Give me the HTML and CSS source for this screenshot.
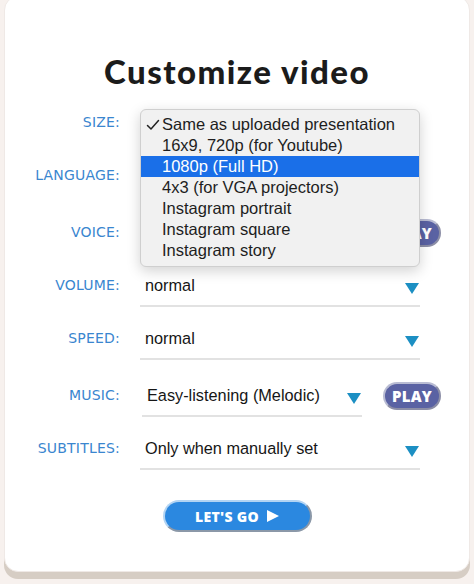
FILE: index.html
```html
<!DOCTYPE html>
<html lang="en">
<head>
<meta charset="utf-8">
<title>Customize video</title>
<link rel="stylesheet" href="styles.css">
</head>
<body>
<div class="card">
  <h1 class="title">Customize video</h1>
  <div class="form">
    <div class="row">
      <div class="label">SIZE:</div>
      <div class="control-wrap">
        <div class="select">
          <span class="value"></span>
          <span class="caret"></span>
        </div>
        <div class="menu">
          <div class="item checked">
            <svg class="check" width="14" height="12" viewBox="0 0 14 12"><path d="M1.5 6.5 L5 10 L12.5 1.5" fill="none" stroke="#222" stroke-width="1.5" stroke-linecap="round" stroke-linejoin="round"/></svg>
            Same as uploaded presentation
          </div>
          <div class="item">16x9, 720p (for Youtube)</div>
          <div class="item active">1080p (Full HD)</div>
          <div class="item">4x3 (for VGA projectors)</div>
          <div class="item">Instagram portrait</div>
          <div class="item">Instagram square</div>
          <div class="item">Instagram story</div>
        </div>
      </div>
    </div>
    <div class="row">
      <div class="label">LANGUAGE:</div>
      <div class="control-wrap">
        <div class="select">
          <span class="value"></span>
          <span class="caret"></span>
        </div>
      </div>
    </div>
    <div class="row play-row">
      <div class="label">VOICE:</div>
      <div class="control-wrap split">
        <div class="select narrow">
          <span class="value"></span>
          <span class="caret"></span>
        </div>
        <button class="play">PLAY</button>
      </div>
    </div>
    <div class="row">
      <div class="label">VOLUME:</div>
      <div class="control-wrap">
        <div class="select">
          <span class="value">normal</span>
          <span class="caret"></span>
        </div>
      </div>
    </div>
    <div class="row">
      <div class="label">SPEED:</div>
      <div class="control-wrap">
        <div class="select">
          <span class="value">normal</span>
          <span class="caret"></span>
        </div>
      </div>
    </div>
    <div class="row play-row">
      <div class="label">MUSIC:</div>
      <div class="control-wrap split">
        <div class="select narrow">
          <span class="value">Easy-listening (Melodic)</span>
          <span class="caret"></span>
        </div>
        <button class="play">PLAY</button>
      </div>
    </div>
    <div class="row">
      <div class="label">SUBTITLES:</div>
      <div class="control-wrap">
        <div class="select">
          <span class="value">Only when manually set</span>
          <span class="caret"></span>
        </div>
      </div>
    </div>
  </div>
  <button class="go">LET'S GO <span class="go-arrow"></span></button>
</div>
</body>
</html>
```
FILE: styles.css
```css
html, body {
  margin: 0;
  padding: 0;
  background: #f7f1ee;
}
body {
  width: 474px;
  height: 584px;
  overflow: hidden;
}
.card {
  margin: -4px 4px 0 4px;
  background: #ffffff;
  border: 1px solid #efe9e6;
  border-radius: 14px;
  box-shadow: 0 7px 0 #d6cdc4;
  display: flex;
  flex-direction: column;
  padding-bottom: 39px;
}
.title {
  margin: 54px 0 15px 0;
  font-family: Lato, "Open Sans", sans-serif;
  font-weight: 900;
  font-size: 33px;
  line-height: 40px;
  letter-spacing: 1.45px;
  color: #1b1b1b;
  text-align: center;
}
.form {
  display: flex;
  flex-direction: column;
}
.row {
  display: grid;
  grid-template-columns: 115px 280px;
  column-gap: 20px;
  height: 53px;
}
.row.play-row {
  margin-top: 4px;
}
.label {
  text-align: right;
  padding-top: 6px;
  line-height: 20px;
  font-family: "DejaVu Sans", sans-serif;
  font-size: 14px;
  letter-spacing: 0.2px;
  color: #3a86cf;
}
.control-wrap {
  position: relative;
}
.control-wrap.split {
  display: flex;
  align-items: flex-start;
  width: 301px;
}
.select {
  display: flex;
  justify-content: space-between;
  align-items: flex-start;
  min-height: 20px;
  padding: 6px 1px 10px 5px;
  line-height: 20px;
  border-bottom: 2px solid #e2e2e2;
  font-family: "Liberation Sans", Arial, sans-serif;
  font-size: 16.3px;
  color: #161616;
}
.select.narrow {
  width: 214px;
  margin-left: 2px;
}
.caret {
  margin-top: 8px;
  width: 0;
  height: 0;
  border-left: 7px solid transparent;
  border-right: 7px solid transparent;
  border-top: 11px solid #1c8fc3;
}
.play {
  margin-left: 21px;
  margin-top: 3px;
  width: 58px;
  height: 28px;
  border-radius: 14px;
  background: #5a62a3;
  border: 2px solid;
  border-color: #b9bcd3 #8c8ea6 #8c8ea6 #b9bcd3;
  color: #ffffff;
  font-family: "Open Sans", sans-serif;
  font-weight: 800;
  font-size: 15px;
  letter-spacing: 0.2px;
  padding: 0;
  line-height: 24px;
}
.menu {
  position: absolute;
  top: 3px;
  left: 0;
  width: 280px;
  box-sizing: border-box;
  background: #f1f1f1;
  border: 1px solid #cfcfcf;
  border-radius: 6px;
  box-shadow: 0 4px 14px rgba(0, 0, 0, 0.18);
  padding: 4px 0 5px 0;
  z-index: 5;
  font-family: "Liberation Sans", Arial, sans-serif;
  font-size: 16.5px;
  color: #1e1e1e;
}
.item {
  position: relative;
  height: 21px;
  line-height: 21px;
  padding-left: 21px;
}
.item.active {
  background: #1a6fe8;
  color: #ffffff;
}
.check {
  position: absolute;
  left: 5px;
  top: 5px;
}
.go {
  align-self: center;
  margin-top: 15px;
  width: 149px;
  height: 32px;
  border-radius: 16px;
  background: #2b88e0;
  border: 2px solid;
  border-color: #b3d4f3 #8b98a8 #8b98a8 #b3d4f3;
  color: #ffffff;
  font-family: "Open Sans", sans-serif;
  font-weight: 800;
  font-size: 14px;
  letter-spacing: 0.3px;
  padding: 0;
  display: flex;
  align-items: center;
  justify-content: center;
  gap: 8px;
}
.go-arrow {
  width: 0;
  height: 0;
  border-top: 6.5px solid transparent;
  border-bottom: 6.5px solid transparent;
  border-left: 12px solid #ffffff;
}
```
